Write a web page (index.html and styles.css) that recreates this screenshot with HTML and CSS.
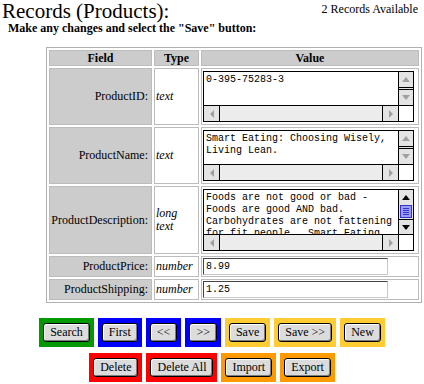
FILE: index.html
```html
<!DOCTYPE html>
<html lang="en">
<head>
    <meta charset="UTF-8">
    <title>Records (Products)</title>
    <link rel="stylesheet" href="styles.css">
</head>
<body>
    <div class="head">
        <h1 class="title">Records (Products):</h1>
        <span class="count">2 Records Available</span>
    </div>
    <p class="hint">Make any changes and select the "Save" button:</p>

    <table class="records">
        <tr>
            <th class="col-field">Field</th>
            <th class="col-type">Type</th>
            <th class="col-value">Value</th>
        </tr>
        <tr>
            <td class="field">ProductID:</td>
            <td class="type">text</td>
            <td class="value">
                <div class="memo memo-short">
                    <textarea class="memo-text">0-395-75283-3</textarea>
                    <div class="vscroll">
                        <span class="arrow-btn"><i class="tri tri-up"></i></span>
                        <span class="track"></span>
                        <span class="arrow-btn"><i class="tri tri-down"></i></span>
                    </div>
                    <div class="hscroll">
                        <span class="arrow-btn"><i class="tri tri-left"></i></span>
                        <span class="track"></span>
                        <span class="arrow-btn"><i class="tri tri-right"></i></span>
                    </div>
                    <span class="corner"></span>
                </div>
            </td>
        </tr>
        <tr>
            <td class="field">ProductName:</td>
            <td class="type">text</td>
            <td class="value">
                <div class="memo memo-short">
                    <textarea class="memo-text">Smart Eating: Choosing Wisely, Living Lean.</textarea>
                    <div class="vscroll">
                        <span class="arrow-btn"><i class="tri tri-up"></i></span>
                        <span class="track"></span>
                        <span class="arrow-btn"><i class="tri tri-down"></i></span>
                    </div>
                    <div class="hscroll">
                        <span class="arrow-btn"><i class="tri tri-left"></i></span>
                        <span class="track"></span>
                        <span class="arrow-btn"><i class="tri tri-right"></i></span>
                    </div>
                    <span class="corner"></span>
                </div>
            </td>
        </tr>
        <tr>
            <td class="field">ProductDescription:</td>
            <td class="type">long<br>text</td>
            <td class="value">
                <div class="memo memo-long">
                    <textarea class="memo-text">Foods are not good or bad - Foods are good AND bad. Carbohydrates are not fattening for fit people.  Smart Eating shows you how.</textarea>
                    <div class="vscroll">
                        <span class="arrow-btn"><i class="tri tri-up on"></i></span>
                        <span class="thumb"></span>
                        <span class="track"></span>
                        <span class="arrow-btn"><i class="tri tri-down on"></i></span>
                    </div>
                    <div class="hscroll">
                        <span class="arrow-btn"><i class="tri tri-left"></i></span>
                        <span class="track"></span>
                        <span class="arrow-btn"><i class="tri tri-right"></i></span>
                    </div>
                    <span class="corner"></span>
                </div>
            </td>
        </tr>
        <tr>
            <td class="field">ProductPrice:</td>
            <td class="type">number</td>
            <td class="value value-line"><input class="line-input" type="text" value="8.99"></td>
        </tr>
        <tr>
            <td class="field">ProductShipping:</td>
            <td class="type">number</td>
            <td class="value value-line"><input class="line-input" type="text" value="1.25"></td>
        </tr>
    </table>

    <div class="actions">
        <div class="action-row">
            <span class="tool tool-green"><button>Search</button></span>
            <span class="tool tool-blue"><button>First</button></span>
            <span class="tool tool-blue"><button>&lt;&lt;</button></span>
            <span class="tool tool-blue"><button>&gt;&gt;</button></span>
            <span class="tool tool-yellow"><button>Save</button></span>
            <span class="tool tool-yellow"><button>Save &gt;&gt;</button></span>
            <span class="tool tool-yellow"><button>New</button></span>
        </div>
        <div class="action-row">
            <span class="tool tool-red"><button>Delete</button></span>
            <span class="tool tool-red"><button>Delete All</button></span>
            <span class="tool tool-orange"><button>Import</button></span>
            <span class="tool tool-orange"><button>Export</button></span>
        </div>
    </div>
</body>
</html>
```

FILE: styles.css
```css
* {
    box-sizing: border-box;
}

body {
    margin: 0;
    font-family: "Liberation Serif", serif;
    color: #000;
    background: #fff;
}

.head {
    display: flex;
    justify-content: space-between;
    align-items: flex-start;
}

.title {
    margin: 0 0 0 2px;
    font-size: 21px;
    font-weight: normal;
    line-height: 22px;
}

.count {
    margin-right: 6px;
    padding-top: 3px;
    font-size: 12px;
    line-height: 13px;
}

.hint {
    margin: 0 0 0 8px;
    font-size: 12px;
    font-weight: bold;
    line-height: 13px;
}

/* record table */
.records {
    margin: 12px 0 0 46px;
    border: 1px solid #b0b0b0;
    border-spacing: 2px;
    font-size: 12px;
}

.records th,
.records td {
    border: 1px solid #bcbcbc;
}

.records th {
    background: #cccccc;
    font-weight: bold;
    line-height: 14px;
    padding: 0;
}

.col-field { width: 103px; }
.col-type { width: 45px; }
.col-value { width: 218px; }

.field {
    background: #cccccc;
    text-align: right;
    padding: 0 3px 0 0;
}

.type {
    font-style: italic;
    font-size: 12px;
    line-height: 13px;
    padding: 0 1px;
}

.value {
    padding: 2px 4px 2px 1px;
}

.value-line {
    padding: 1px 4px 1px 1px;
}

/* fake old-style textarea */
.memo {
    display: grid;
    grid-template-columns: 1fr 15px;
    width: 211px;
    border: 1px solid #000;
    background: #fff;
}

.memo-short { grid-template-rows: 33px 16px; }
.memo-long { grid-template-rows: 44px 16px; }

.memo-text {
    border: none;
    margin: 0;
    padding: 2px 2px 0;
    resize: none;
    overflow: hidden;
    font: 10px/12px "Liberation Mono", monospace;
    color: #000;
    background: #fff;
}

.vscroll {
    display: flex;
    flex-direction: column;
    border-left: 1px solid #000;
    background: #e4e4e4;
}

.vscroll .arrow-btn {
    height: 15px;
}

.vscroll .track {
    flex: 1;
    border-top: 1px solid #000;
    border-bottom: 1px solid #000;
}

.memo-long .vscroll .arrow-btn { height: 14px; }
.memo-long .vscroll .track { border-top: none; }

.thumb {
    height: 13px;
    margin: 1px 1px 0;
    background: #9a9aff;
    border: 1px solid #3434c8;
    padding: 2px 2px 0;
}

.thumb::before {
    content: "";
    display: block;
    height: 1px;
    background: #3434c8;
    box-shadow: 0 2px 0 #3434c8, 0 4px 0 #3434c8, 0 6px 0 #3434c8;
}

.hscroll {
    display: flex;
    border-top: 1px solid #000;
    background: #e4e4e4;
}

.hscroll .arrow-btn {
    width: 15px;
}

.hscroll .track {
    flex: 1;
    border-left: 1px solid #000;
    border-right: 1px solid #000;
    background: #ececec;
}

.arrow-btn {
    display: flex;
    align-items: center;
    justify-content: center;
}

.corner {
    border-top: 1px solid #000;
    border-left: 1px solid #000;
    background: #fff;
}

.tri {
    width: 0;
    height: 0;
    border: 4px solid transparent;
}

.tri-up { border-top: 0; border-bottom: 5px solid #a0a0a0; }
.tri-down { border-bottom: 0; border-top: 5px solid #a0a0a0; }
.tri-left { border-left: 0; border-right: 4px solid #a0a0a0; }
.tri-right { border-right: 0; border-left: 4px solid #a0a0a0; }
.tri-up.on { border-bottom-color: #000; }
.tri-down.on { border-top-color: #000; }

.line-input {
    display: block;
    width: 185px;
    height: 17px;
    margin: 0;
    padding: 0 2px;
    border: 1px solid;
    border-color: #444 #c8c8c8 #c8c8c8 #444;
    font: 10px "Liberation Mono", monospace;
    color: #000;
    background: #fff;
}

/* button bar */
.actions {
    display: flex;
    flex-direction: column;
    align-items: center;
    gap: 6px;
    margin-top: 15px;
}

.action-row {
    display: flex;
    gap: 4px;
}

.tool {
    padding: 5px 4px;
}

.tool-green { background: #009a00; }
.tool-blue { background: #0000ff; }
.tool-yellow { background: #ffcc33; }
.tool-red { background: #ff0000; }
.tool-orange { background: #ff9900; }

button {
    display: block;
    height: 19px;
    padding: 0 6px;
    font: 12px "Liberation Serif", serif;
    color: #000;
    background: #dcdcdc;
    border: 1px solid #000;
    border-radius: 3px;
    box-shadow: inset 1px 1px 0 #fff, inset -1px -1px 0 #7c7c7c;
}
```
